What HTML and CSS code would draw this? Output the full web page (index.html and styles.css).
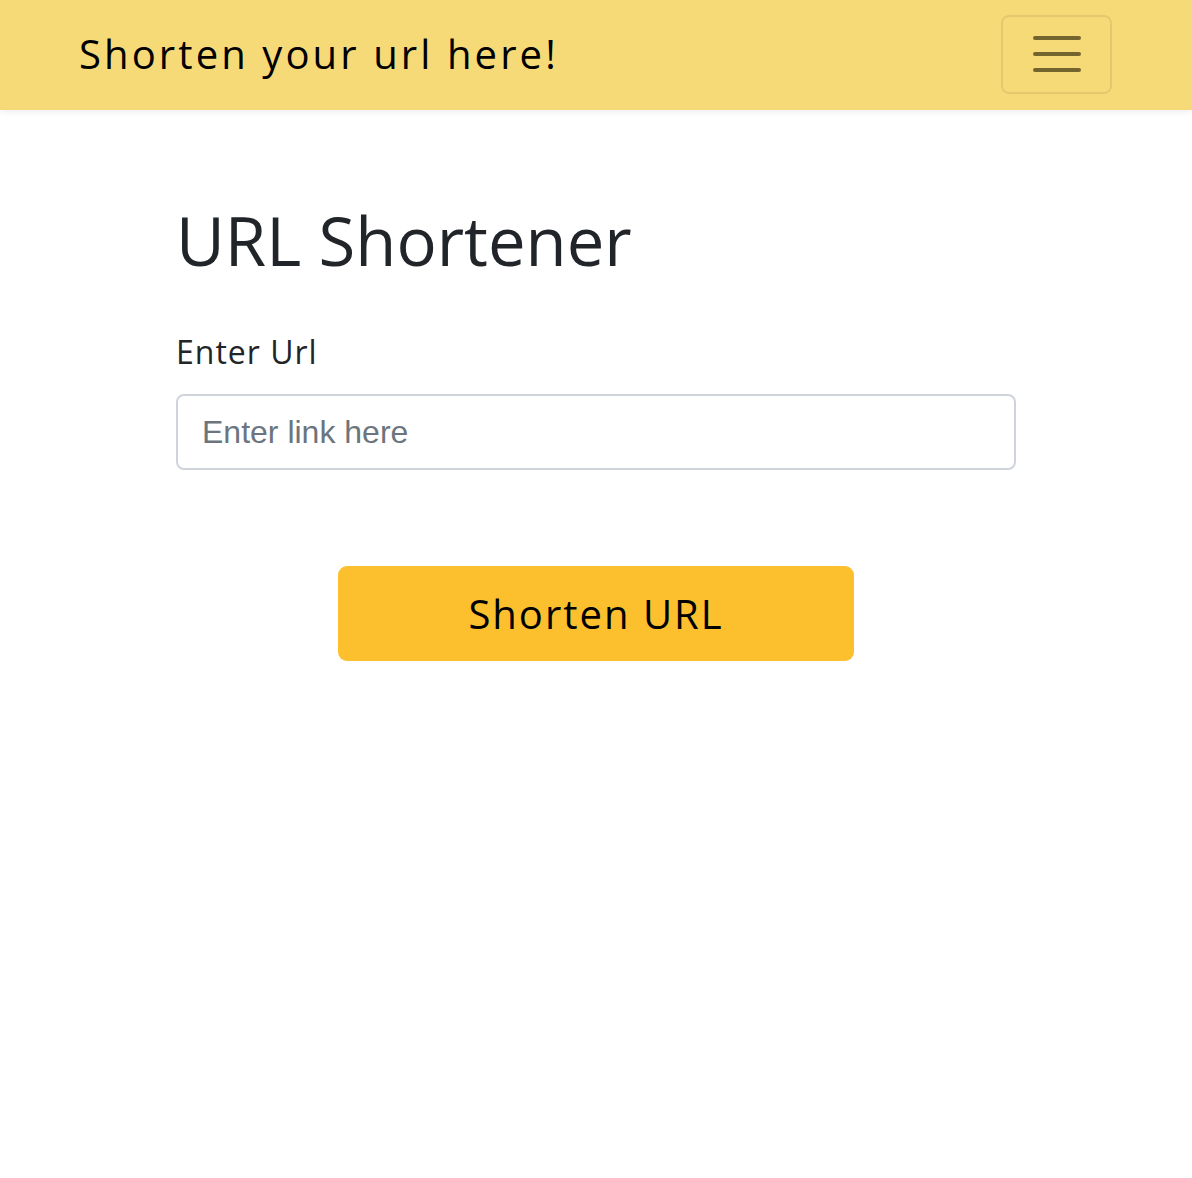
FILE: index.html
```html
<!DOCTYPE html>
<html lang="en">
<head>
<meta charset="utf-8">
<title>URL Shortener</title>
<link rel="stylesheet" href="styles.css">
</head>
<body>
<header class="navbar">
  <a class="brand" href="#">Shorten your url here!</a>
  <button class="toggler" type="button" aria-label="Toggle navigation">
    <span class="bar"></span><span class="bar"></span><span class="bar"></span>
  </button>
</header>
<main class="container">
  <h1 class="title">URL Shortener</h1>
  <form class="form">
    <label class="label" for="url">Enter Url</label>
    <input class="input" id="url" type="text" placeholder="Enter link here">
    <div class="actions">
      <button class="submit" type="button">Shorten URL</button>
    </div>
  </form>
</main>
</body>
</html>
```
FILE: styles.css
```css
* { box-sizing: border-box; }
html, body { margin: 0; padding: 0; }
body {
  background: #ffffff;
  font-family: "Open Sans", "DejaVu Sans", sans-serif;
  color: #212529;
}
.navbar {
  height: 110px;
  background: #f7da78;
  display: flex;
  align-items: center;
  justify-content: space-between;
  padding: 0 80px 0 79px;
  box-shadow: 0 2px 6px rgba(0, 0, 0, 0.07);
  position: relative;
}
.brand {
  font-size: 40px;
  color: #000;
  text-decoration: none;
  letter-spacing: 3.1px;
  line-height: 1;
  margin-top: -2px;
}
.toggler {
  width: 111px;
  height: 79px;
  margin-top: -2px;
  background: transparent;
  border: 2px solid rgba(0, 0, 0, 0.08);
  border-radius: 8px;
  display: flex;
  flex-direction: column;
  align-items: center;
  justify-content: center;
  gap: 12px;
  padding: 0;
}
.bar {
  display: block;
  width: 48px;
  height: 4px;
  border-radius: 2px;
  background: #74652f;
}
.container {
  width: 840px;
  margin: 0 auto;
  padding-top: 90px;
}
.title {
  font-size: 67px;
  font-weight: 400;
  line-height: 1.2;
  margin: 0 0 48px;
}
.form { display: flex; flex-direction: column; }
.label {
  font-size: 32px;
  line-height: 1.5;
  margin-bottom: 18px;
  letter-spacing: 1px;
}
.input {
  width: 100%;
  height: 76px;
  border: 2px solid #ced4da;
  border-radius: 8px;
  padding: 0 24px;
  font-family: "Liberation Sans", Arial, sans-serif;
  font-size: 32px;
  color: #495057;
}
.input::placeholder { color: #6c757d; }
.actions {
  display: flex;
  justify-content: center;
  margin-top: 96px;
}
.submit {
  width: 516px;
  height: 95px;
  background: #fcc02e;
  border: none;
  border-radius: 9px;
  font-family: "Open Sans", "DejaVu Sans", sans-serif;
  font-size: 40px;
  color: #000;
  letter-spacing: 2px;
}
```
